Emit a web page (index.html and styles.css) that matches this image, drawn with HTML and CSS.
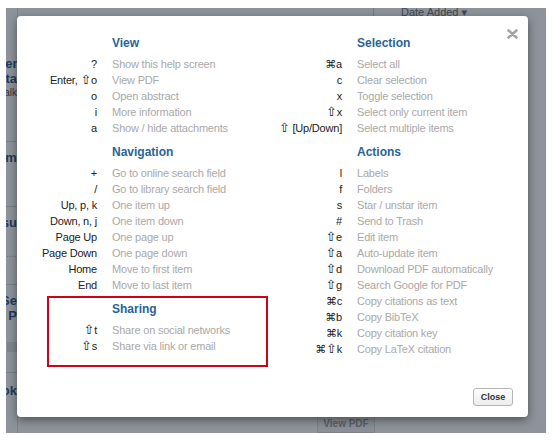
FILE: index.html
```html
<!DOCTYPE html>
<html lang="en">
<head>
  <meta charset="UTF-8" />
  <title>Keyboard shortcuts</title>
  <link rel="stylesheet" href="styles.css">
</head>
<body>
  <div class="screen">

    <div class="app">
      <div class="sidebar">
        <div class="doc doc-1">
          <div class="doc-title">Presentati</div>
          <div class="doc-title">Zota</div>
          <div class="doc-meta">Talk</div>
        </div>
        <div class="doc doc-2">
          <div class="doc-title">Summe</div>
        </div>
        <div class="doc doc-3">
          <div class="doc-title">Resu</div>
          <div class="doc-dots">......</div>
        </div>
        <div class="doc doc-4">
          <div class="doc-title">Se</div>
          <div class="doc-title">t P</div>
          <div class="doc-tags">o <span class="tag"></span></div>
        </div>
        <div class="doc doc-5">
          <div class="doc-title">Look</div>
        </div>
      </div>
      <div class="main">
        <div class="col-head">Date Added ▾</div>
        <div class="main-foot">
          <span class="ghost-btn">View PDF</span>
        </div>
      </div>
    </div>

    <div class="backdrop">
      <div class="modal">
        <svg class="modal-x" width="11" height="10" viewBox="0 0 11 10">
          <path d="M1.5 1.5 L9.5 8.5 M9.5 1.5 L1.5 8.5" stroke="#a4a4a4" stroke-width="2.6" stroke-linecap="round"/>
        </svg>

        <div class="modal-body">
          <div class="column">
            <div class="section">
              <h3>View</h3>
              <div class="row"><span class="key">?</span><span class="desc">Show this help screen</span></div>
              <div class="row"><span class="key">Enter,&nbsp;<span class="shift">⇧</span>o</span><span class="desc">View PDF</span></div>
              <div class="row"><span class="key">o</span><span class="desc">Open abstract</span></div>
              <div class="row"><span class="key">i</span><span class="desc">More information</span></div>
              <div class="row"><span class="key">a</span><span class="desc">Show / hide attachments</span></div>
            </div>
            <div class="section">
              <h3>Navigation</h3>
              <div class="row"><span class="key">+</span><span class="desc">Go to online search field</span></div>
              <div class="row"><span class="key">/</span><span class="desc">Go to library search field</span></div>
              <div class="row"><span class="key">Up, p, k</span><span class="desc">One item up</span></div>
              <div class="row"><span class="key">Down, n, j</span><span class="desc">One item down</span></div>
              <div class="row"><span class="key">Page Up</span><span class="desc">One page up</span></div>
              <div class="row"><span class="key">Page Down</span><span class="desc">One page down</span></div>
              <div class="row"><span class="key">Home</span><span class="desc">Move to first item</span></div>
              <div class="row"><span class="key">End</span><span class="desc">Move to last item</span></div>
            </div>
            <div class="section sharing">
              <h3>Sharing</h3>
              <div class="row"><span class="key"><span class="shift">⇧</span>t</span><span class="desc">Share on social networks</span></div>
              <div class="row"><span class="key"><span class="shift">⇧</span>s</span><span class="desc">Share via link or email</span></div>
            </div>
          </div>

          <div class="column">
            <div class="section">
              <h3>Selection</h3>
              <div class="row"><span class="key">⌘a</span><span class="desc">Select all</span></div>
              <div class="row"><span class="key">c</span><span class="desc">Clear selection</span></div>
              <div class="row"><span class="key">x</span><span class="desc">Toggle selection</span></div>
              <div class="row"><span class="key"><span class="shift">⇧</span>x</span><span class="desc">Select only current item</span></div>
              <div class="row"><span class="key"><span class="shift">⇧</span>&nbsp;[Up/Down]</span><span class="desc">Select multiple items</span></div>
            </div>
            <div class="section">
              <h3>Actions</h3>
              <div class="row"><span class="key">l</span><span class="desc">Labels</span></div>
              <div class="row"><span class="key">f</span><span class="desc">Folders</span></div>
              <div class="row"><span class="key">s</span><span class="desc">Star / unstar item</span></div>
              <div class="row"><span class="key">#</span><span class="desc">Send to Trash</span></div>
              <div class="row"><span class="key"><span class="shift">⇧</span>e</span><span class="desc">Edit item</span></div>
              <div class="row"><span class="key"><span class="shift">⇧</span>a</span><span class="desc">Auto-update item</span></div>
              <div class="row"><span class="key"><span class="shift">⇧</span>d</span><span class="desc">Download PDF automatically</span></div>
              <div class="row"><span class="key"><span class="shift">⇧</span>g</span><span class="desc">Search Google for PDF</span></div>
              <div class="row"><span class="key">⌘c</span><span class="desc">Copy citations as text</span></div>
              <div class="row"><span class="key">⌘b</span><span class="desc">Copy BibTeX</span></div>
              <div class="row"><span class="key">⌘k</span><span class="desc">Copy citation key</span></div>
              <div class="row"><span class="key">⌘<span class="shift">⇧</span>k</span><span class="desc">Copy LaTeX citation</span></div>
            </div>
          </div>
        </div>

        <div class="modal-foot">
          <button class="close-btn">Close</button>
        </div>
      </div>
    </div>

  </div>
</body>
</html>
```

FILE: styles.css
```css
body {
  margin: 0;
  background: #fff;
  font-family: 'Liberation Sans', Arial, 'DejaVu Sans', sans-serif;
}

.screen {
  position: relative;
  width: 540px;
  height: 425px;
  margin: 8px 0 0 6px;
  overflow: hidden;
}

/* app behind the overlay */
.app {
  display: flex;
  height: 100%;
  background: #fff;
}

.sidebar {
  width: 40px;
  margin-left: -29px;
  border-right: 1px solid #ddd;
  white-space: nowrap;
  overflow: hidden;
  text-align: right;
}

.doc {
  border-bottom: 1px solid #d4d4d4;
  box-sizing: border-box;
}

.doc-1 { margin-top: 40px; height: 94px; padding-top: 8px; }
.doc-2 { height: 65px; padding-top: 8px; }
.doc-3 { height: 78px; padding-top: 8px; }
.doc-4 { height: 88px; padding-top: 8px; }
.doc-5 { height: 60px; padding-top: 10px; border-bottom: none; }

.doc-title {
  font-size: 13px;
  font-weight: bold;
  color: #1c4f86;
  line-height: 15px;
}

.doc-meta {
  font-size: 10px;
  color: #444;
  line-height: 13px;
}

.doc-dots {
  margin-top: 18px;
  font-size: 10px;
  color: #aaa;
}

.doc-tags {
  margin-top: 18px;
  font-size: 10px;
  color: #777;
}

.tag {
  display: inline-block;
  width: 10px;
  height: 10px;
  background: #e4e4e4;
  vertical-align: middle;
}

.main {
  flex: 1;
  display: flex;
  flex-direction: column;
  padding-left: 355px;
}

.col-head {
  margin-top: -4px;
  padding-left: 27px;
  border-left: 1px solid #ccc;
  font-size: 11px;
  line-height: 16px;
  color: #666;
}

.main-foot {
  margin-top: auto;
  margin-left: -56px;
}

.ghost-btn {
  display: inline-block;
  width: 56px;
  height: 16px;
  border: 1px solid #ddd;
  background: #f6f6f6;
  font-size: 10px;
  font-weight: bold;
  line-height: 16px;
  color: #999;
  text-align: center;
}

/* overlay */
.backdrop {
  position: absolute;
  inset: 0;
  background: rgba(30, 40, 55, 0.5);
}

.modal {
  position: absolute;
  left: 11px;
  top: 8px;
  width: 511px;
  height: 401px;
  display: flex;
  flex-direction: column;
  box-sizing: border-box;
  padding: 19px 0 0 15px;
  background: #fff;
  border-radius: 4px;
  box-shadow: 0 3px 10px rgba(0, 0, 0, 0.45);
}

.modal-x {
  position: absolute;
  top: 13px;
  right: 10px;
}

.modal-body {
  display: grid;
  grid-template-columns: 245px 1fr;
}

.section {
  margin-bottom: 8px;
}

h3 {
  margin: 0 0 5px 80px;
  font-size: 12px;
  line-height: 16px;
  font-weight: bold;
  color: #2a6395;
}

.row {
  display: grid;
  grid-template-columns: 65px 1fr;
  column-gap: 15px;
  font-size: 11px;
  line-height: 16px;
  letter-spacing: -0.2px;
  white-space: nowrap;
}

.key {
  display: flex;
  justify-content: flex-end;
  color: #222;
}

.shift {
  font-family: 'DejaVu Sans', sans-serif;
  font-size: 13px;
  line-height: 16px;
}

.desc {
  color: #a9a9a9;
}

.sharing {
  position: relative;
}

.sharing::after {
  content: "";
  position: absolute;
  left: 15px;
  top: -5px;
  width: 217px;
  height: 67px;
  border: 2px solid #d0021b;
}

.modal-foot {
  margin-top: auto;
  display: flex;
  justify-content: flex-end;
  padding: 0 15px 11px 0;
}

.close-btn {
  width: 40px;
  height: 18px;
  padding: 0;
  border: 1px solid #b5b5b5;
  border-radius: 3px;
  background: linear-gradient(#fff, #ececec);
  font-family: inherit;
  font-size: 9px;
  font-weight: bold;
  color: #333;
}
```
